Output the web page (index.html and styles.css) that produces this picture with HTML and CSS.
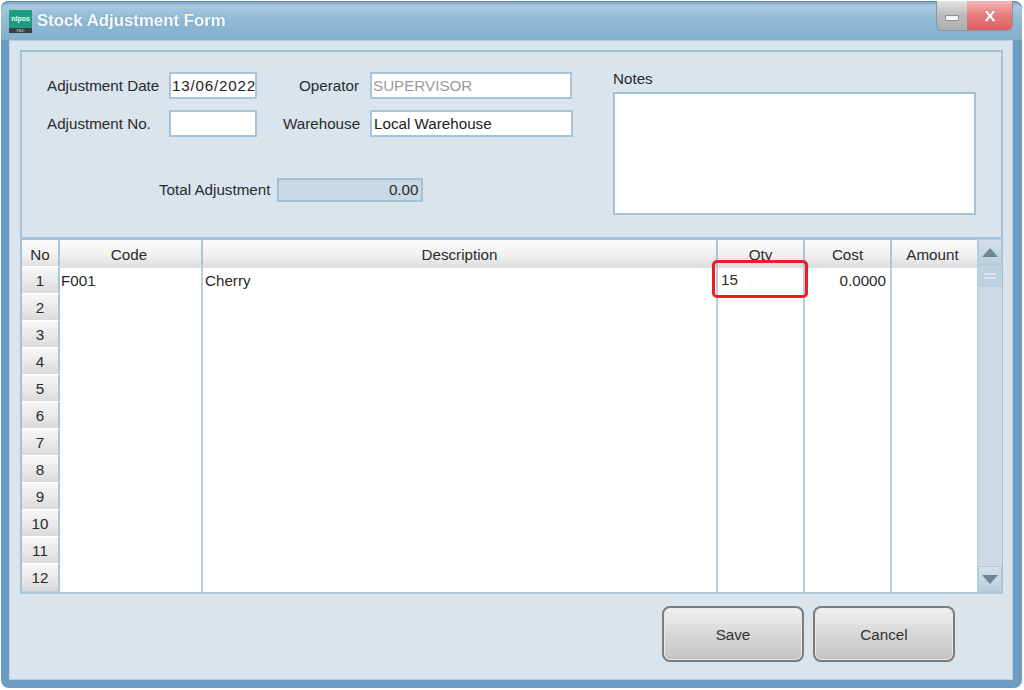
FILE: index.html
```html
<!DOCTYPE html>
<html lang="en">
<head>
<meta charset="utf-8">
<title>Stock Adjustment Form</title>
<link rel="stylesheet" href="styles.css">
</head>
<body>
<div class="window">
  <header class="titlebar">
    <div class="app-icon"><span class="app-icon-top">nlpos</span><span class="app-icon-bottom">PAD</span></div>
    <h1 class="title">Stock Adjustment Form</h1>
    <div class="win-buttons">
      <div class="win-btn win-min"><span class="min-glyph"></span></div>
      <div class="win-btn win-close">
        <svg width="18" height="14" viewBox="0 0 18 14"><path d="M3 1.5h3.4L9 5l2.6-3.5H15L11 7l4 5.500h-3.400L9 9l-2.600 3.500H3L7 7z" fill="#fff" stroke="#b9535a" stroke-width=".5"/></svg>
      </div>
    </div>
  </header>
  <main class="client">
    <section class="panel">
      <div class="fields">
        <div class="field-grid">
          <label class="lbl">Adjustment Date</label>
          <div class="input input-date">13/06/2022</div>
          <label class="lbl lbl-op">Operator</label>
          <div class="input input-muted">SUPERVISOR</div>
          <label class="lbl">Adjustment No.</label>
          <div class="input"></div>
          <label class="lbl">Warehouse</label>
          <div class="input input-wide">Local Warehouse</div>
        </div>
        <div class="total-row">
          <label class="lbl">Total Adjustment</label>
          <div class="total-value">0.00</div>
        </div>
      </div>
      <div class="notes">
        <label class="lbl">Notes</label>
        <div class="notes-box"></div>
      </div>
    </section>
    <section class="sheet">
      <div class="table">
        <div class="row head">
          <div class="hcell">No</div><div class="hcell hcode">Code</div><div class="hcell">Description</div><div class="hcell">Qty</div><div class="hcell">Cost</div><div class="hcell hlast">Amount</div>
        </div>
        <div class="row"><div class="no">1</div><div class="cell code">F001</div><div class="cell">Cherry</div><div class="cell qty">15</div><div class="cell num">0.0000</div><div class="cell last"></div></div>
        <div class="row"><div class="no">2</div><div class="cell"></div><div class="cell"></div><div class="cell"></div><div class="cell"></div><div class="cell last"></div></div>
        <div class="row"><div class="no">3</div><div class="cell"></div><div class="cell"></div><div class="cell"></div><div class="cell"></div><div class="cell last"></div></div>
        <div class="row"><div class="no">4</div><div class="cell"></div><div class="cell"></div><div class="cell"></div><div class="cell"></div><div class="cell last"></div></div>
        <div class="row"><div class="no">5</div><div class="cell"></div><div class="cell"></div><div class="cell"></div><div class="cell"></div><div class="cell last"></div></div>
        <div class="row"><div class="no">6</div><div class="cell"></div><div class="cell"></div><div class="cell"></div><div class="cell"></div><div class="cell last"></div></div>
        <div class="row"><div class="no">7</div><div class="cell"></div><div class="cell"></div><div class="cell"></div><div class="cell"></div><div class="cell last"></div></div>
        <div class="row"><div class="no">8</div><div class="cell"></div><div class="cell"></div><div class="cell"></div><div class="cell"></div><div class="cell last"></div></div>
        <div class="row"><div class="no">9</div><div class="cell"></div><div class="cell"></div><div class="cell"></div><div class="cell"></div><div class="cell last"></div></div>
        <div class="row"><div class="no">10</div><div class="cell"></div><div class="cell"></div><div class="cell"></div><div class="cell"></div><div class="cell last"></div></div>
        <div class="row"><div class="no">11</div><div class="cell"></div><div class="cell"></div><div class="cell"></div><div class="cell"></div><div class="cell last"></div></div>
        <div class="row row-end"><div class="no">12</div><div class="cell"></div><div class="cell"></div><div class="cell"></div><div class="cell"></div><div class="cell last"></div></div>
      </div>
      <div class="scrollbar">
        <div class="sb-btn"><svg width="16" height="9" viewBox="0 0 16 9"><path d="M8 0l8 9H0z" fill="#6f8494"/></svg></div>
        <div class="sb-thumb"><span class="grip"></span><span class="grip"></span></div>
        <div class="sb-track"></div>
        <div class="sb-btn"><svg width="16" height="9" viewBox="0 0 16 9"><path d="M0 0h16L8 9z" fill="#6f8494"/></svg></div>
      </div>
      <div class="highlight"></div>
    </section>
    <footer class="actions">
      <button class="btn" type="button">Save</button>
      <button class="btn" type="button">Cancel</button>
    </footer>
  </main>
</div>
</body>
</html>
```
FILE: styles.css
```css
* { box-sizing: border-box; }
html, body { margin: 0; height: 100%; background: #fff; }
body {
  padding: 1px 2px 2px 1px;
  font-family: "Liberation Sans", Arial, sans-serif;
  font-size: 15.2px;
  color: #2b2b2b;
}
.window {
  height: 687px;
  display: flex;
  flex-direction: column;
  border-radius: 8px;
  background: #6c9cc2;
  padding: 0 9px 8px 8px;
  box-shadow: inset 0 1px 0 #5b88ae;
  filter: blur(.3px);
}
.titlebar {
  flex: none;
  height: 39px;
  margin: 0 -9px 0 -8px;
  padding: 0 9px 0 8px;
  display: flex;
  align-items: flex-start;
  border-radius: 8px 8px 0 0;
  background: linear-gradient(#6f9fc4 0, #a9c9de 5px, #92bbd5 18px, #83afcc 39px);
  box-shadow: inset 0 1px 0 #5b88ae;
}
.app-icon {
  width: 23px;
  height: 23px;
  margin-top: 9px;
  display: flex;
  flex-direction: column;
  overflow: hidden;
  font-weight: 700;
  text-align: center;
}
.app-icon-top {
  height: 18px;
  background: #1d9e80;
  color: #e6fff6;
  font-size: 7px;
  line-height: 17px;
}
.app-icon-bottom {
  height: 5px;
  background: #3a4145;
  color: #9aa;
  font-size: 4px;
  line-height: 5px;
}
.title {
  margin: 10px 0 0 5px;
  font-size: 16.8px;
  line-height: 20px;
  font-weight: 700;
  color: #f3f8fb;
  text-shadow: 0 0 3px #7aa4c2;
}
.win-buttons {
  margin-left: auto;
  display: flex;
  height: 30px;
  border: 1px solid #7d97a9;
  border-top: 0;
  border-radius: 0 0 6px 6px;
  overflow: hidden;
}
.win-btn {
  display: flex;
  align-items: center;
  justify-content: center;
}
.win-min {
  width: 30px;
  background: linear-gradient(#e4e4e4, #b9b9b9 50%, #b0b0b0);
}
.min-glyph {
  width: 14px;
  height: 6px;
  background: #f4f4f4;
  border: 1px solid #8e8e8e;
  border-radius: 1px;
  margin-top: 4px;
}
.win-close {
  width: 45px;
  background: linear-gradient(#f6b5b5, #e97b7b 50%, #de5f62);
}
.client {
  flex: 1;
  min-height: 0;
  display: flex;
  flex-direction: column;
  padding: 9px 9px 0 10px;
  background: #d9e4ed;
  border: 1px solid #b4ccdd;
}
.panel {
  flex: none;
  height: 188px;
  display: flex;
  border: 2px solid #a3c2d7;
  border-bottom-width: 1px;
  padding: 20px 0 0 25px;
}
.fields { width: 566px; }
.field-grid {
  display: grid;
  grid-template-columns: 122px 114px 87px 203px;
  grid-template-rows: 27px 27px;
  row-gap: 11px;
  align-items: center;
}
.lbl { white-space: nowrap; line-height: 20px; }
.lbl-op { margin-left: 16px; }
.input {
  width: 88px;
  height: 27px;
  padding: 0 2px;
  background: #fff;
  border: 2px solid #a8c4d8;
  line-height: 23px;
  color: #222;
  white-space: nowrap;
  overflow: hidden;
}
.input-date { letter-spacing: .8px; padding: 0 0 0 1px; }
.field-grid .input-muted { width: 202px; color: #9a9a9a; padding-left: 1px; }
.field-grid .input-wide { width: 203px; }
.total-row {
  margin: 41px 0 0 112px;
  display: flex;
  align-items: center;
  gap: 7px;
}
.total-value {
  width: 146px;
  height: 24px;
  padding-right: 3px;
  border: 2px solid #a3c2d7;
  background: #c9d9e5;
  text-align: right;
  line-height: 19px;
}
.notes {
  width: 363px;
  display: flex;
  flex-direction: column;
}
.notes .lbl { height: 20px; line-height: 14px; }
.notes-box {
  height: 123px;
  background: #fff;
  border: 2px solid #a3c2d7;
}
.sheet {
  flex: none;
  position: relative;
  height: 356px;
  display: flex;
  background: #fff;
  border: 2px solid #a3c2d7;
  border-top-width: 1px;
  border-right-width: 1px;
  border-bottom-color: #b3c6d6;
}
.table { flex: 1; overflow: hidden; }
.row {
  display: grid;
  grid-template-columns: 38px 143px 515px 87px 87px 85px;
  height: 27px;
}
.head { height: 27px; border-top: 1px solid #a3c2d7; border-bottom: 1px solid #a3c2d7; }
.hcell {
  text-align: center;
  padding-top: 2px;
  line-height: 26px;
  background: linear-gradient(#fafafa, #f2f2f2 50%, #dcdcdc);
  border-right: 2px solid #a9c6da;
}
.hcode { padding-right: 3px; }
.hlast { border-right: 0; padding-right: 4px; }
.no {
  text-align: center;
  line-height: 27px;
  background: linear-gradient(#f8f8f8, #e6e6e6 60%, #d9d9d9);
  border-right: 2px solid #a9c6da;
  border-bottom: 2px solid #bcd2e1;
  border-top: 1px solid #fff;
}
.cell {
  padding: 1px 2px 0;
  line-height: 27px;
  border-right: 2px solid #b5cee0;
}
.last { border-right: 0; }
.code { padding-left: 1px; }
.num { text-align: right; padding-right: 4px; }
.qty { padding-left: 3px; line-height: 26px; }
.row-end { height: 26px; }
.scrollbar {
  width: 25px;
  display: flex;
  flex-direction: column;
  background: #ccdbe6;
  border-left: 1px solid #b5cee0;
}
.sb-btn {
  height: 26px;
  display: flex;
  align-items: center;
  justify-content: center;
  background: linear-gradient(#d2e0ea, #b9cfdf);
  border: 1px solid #b2c9da;
}
.sb-thumb {
  height: 22px;
  display: flex;
  flex-direction: column;
  align-items: center;
  justify-content: center;
  gap: 2px;
  background: #bdd2e1;
}
.grip { width: 12px; height: 2px; background: #dbe6ee; }
.sb-track { flex: 1; }
.highlight {
  position: absolute;
  left: 690px;
  top: 21px;
  width: 96px;
  height: 38px;
  border: 3px solid #ee1c25;
  border-radius: 5px;
}
.actions {
  flex: none;
  margin-top: 12px;
  padding-right: 48px;
  display: flex;
  justify-content: flex-end;
  gap: 9px;
}
.btn {
  width: 142px;
  height: 56px;
  font: inherit;
  color: #333;
  background: linear-gradient(#f1f1f1, #d7d7d7 50%, #c4c4c4);
  border: 2px solid #7c7c7c;
  border-radius: 8px;
  box-shadow: inset 0 0 0 1px #e9e9e9;
}
```
